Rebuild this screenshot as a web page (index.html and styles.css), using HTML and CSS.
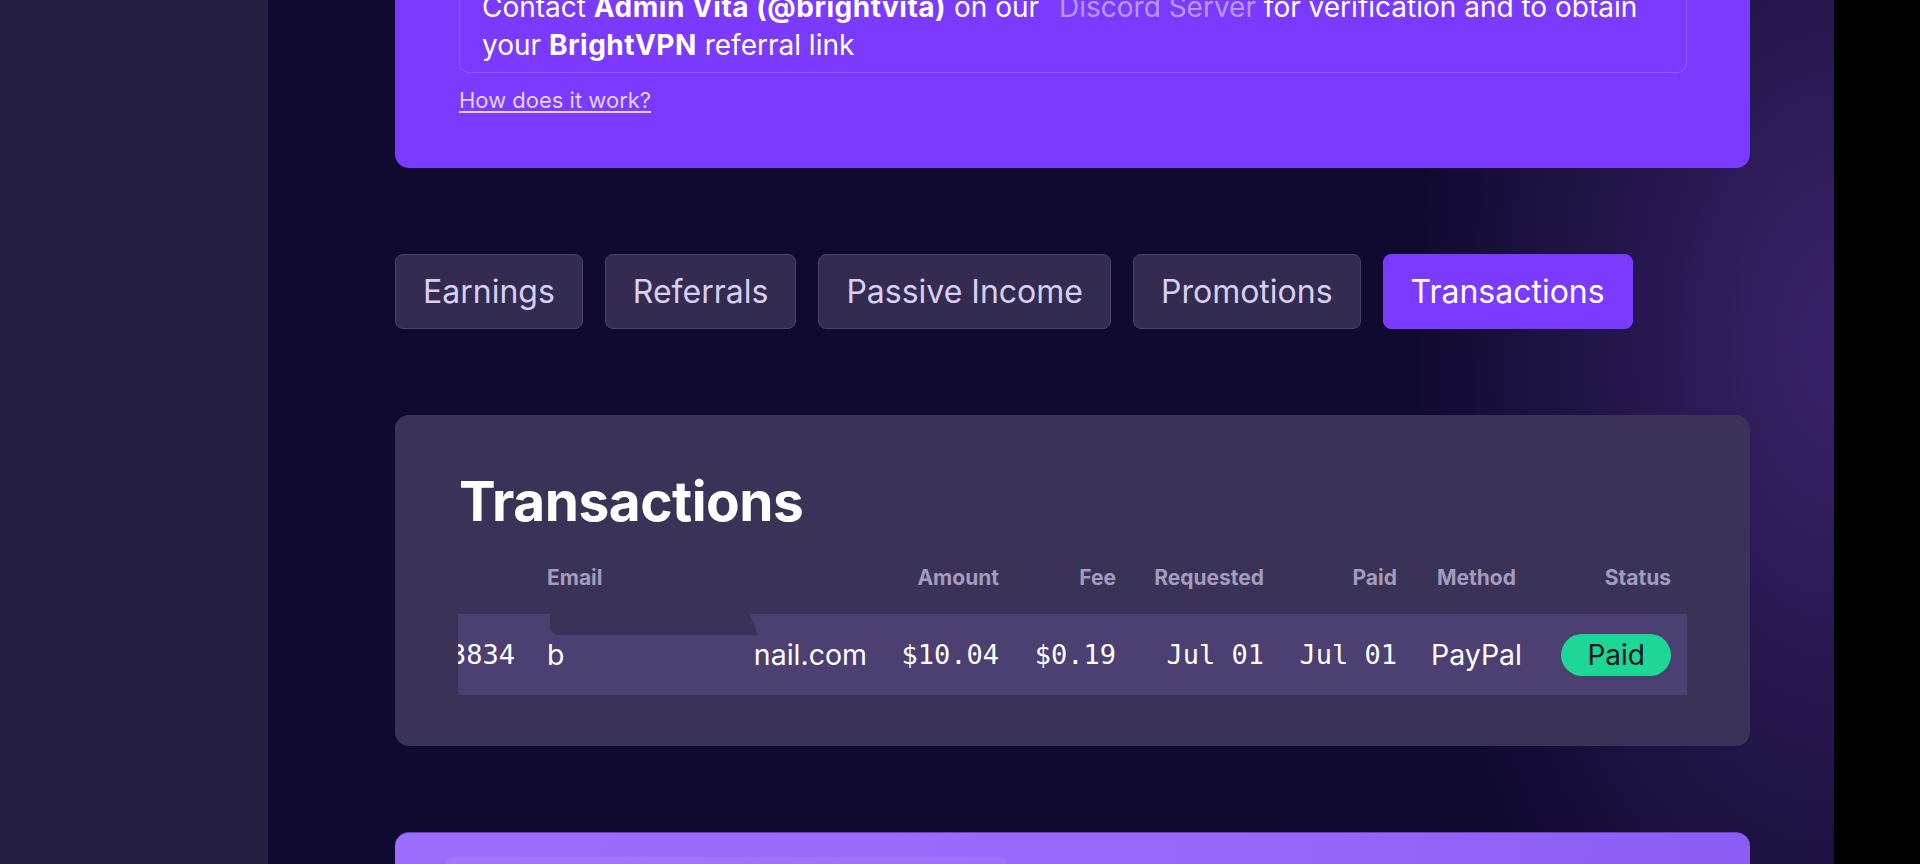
FILE: index.html
```html
<!DOCTYPE html>
<html lang="en">
<head>
  <meta charset="UTF-8" />
  <meta name="viewport" content="width=device-width, initial-scale=1.0"/>
  <title>Transactions</title>
  <link rel="stylesheet" href="styles.css">
</head>
<body>
  <aside class="sidebar"></aside>

  <main class="main">
    <section class="promo-card">
      <div class="promo-note">
        Contact <strong>Admin Vita (@brightvita)</strong> on our <a class="discord-link" href="#">Discord Server</a> for verification and to obtain<br>
        your <strong>BrightVPN</strong> referral link
      </div>
      <a class="how-link" href="#">How does it work?</a>
    </section>

    <nav class="tabs">
      <button class="tab">Earnings</button>
      <button class="tab">Referrals</button>
      <button class="tab">Passive Income</button>
      <button class="tab">Promotions</button>
      <button class="tab active">Transactions</button>
    </nav>

    <section class="panel">
      <h2 class="panel-title">Transactions</h2>
      <div class="table-scroll">
        <div class="tx-table">
          <div class="th">ID</div>
          <div class="th">Email</div>
          <div class="th right">Amount</div>
          <div class="th right">Fee</div>
          <div class="th right">Requested</div>
          <div class="th right">Paid</div>
          <div class="th center">Method</div>
          <div class="th right">Status</div>

          <div class="td right mono">13834</div>
          <div class="td email">b<span class="email-hidden"></span>nail.com<span class="redact"></span></div>
          <div class="td right mono">$10.04</div>
          <div class="td right mono">$0.19</div>
          <div class="td right mono">Jul 01</div>
          <div class="td right mono">Jul 01</div>
          <div class="td center">PayPal</div>
          <div class="td right"><span class="badge paid">Paid</span></div>
        </div>
      </div>
    </section>

    <section class="promo-card next">
      <div class="next-head"></div>
    </section>
  </main>

  <div class="edge"></div>
</body>
</html>
```

FILE: styles.css
```css
* {
  margin: 0;
  padding: 0;
  box-sizing: border-box;
}

body {
  font-family: Inter, "Open Sans", sans-serif;
  background: #000000;
  color: #ffffff;
  display: flex;
  height: 864px;
  overflow: hidden;
}

.sidebar {
  width: 268px;
  flex-shrink: 0;
  background: #25203f;
}

.edge {
  width: 86px;
  flex-shrink: 0;
  background: #000000;
}

.main {
  width: 1566px;
  flex-shrink: 0;
  padding: 0 84px 0 127px;
  display: flex;
  flex-direction: column;
  gap: 86px;
  overflow: hidden;
  background:
    radial-gradient(ellipse 420px 760px at 100% 40%, rgba(58, 36, 108, 0.95), rgba(17, 10, 48, 0) 100%),
    #110a30;
}

/* referral card */
.promo-card {
  background: #7b3aff;
  border-radius: 14px;
  padding: 40px 63px 54px 64px;
  margin-top: -65px;
  flex-shrink: 0;
}

.promo-note {
  border: 1px solid rgba(255, 255, 255, 0.18);
  border-radius: 10px;
  padding: 12px 22px 8px;
  font-size: 28px;
  line-height: 38px;
  color: #ffffff;
  white-space: nowrap;
}

.promo-note strong {
  font-weight: 700;
  letter-spacing: 0.5px;
}

.discord-link {
  color: #b499fb;
  text-decoration: none;
  margin-left: 12px;
}

.how-link {
  display: inline-block;
  margin-top: 13px;
  font-size: 22px;
  line-height: 28px;
  color: #e2d3ff;
  text-decoration: underline;
  text-underline-offset: 3px;
}

/* tabs */
.tabs {
  display: flex;
  gap: 22px;
  flex-shrink: 0;
}

.tab {
  height: 75px;
  padding: 0 27px;
  background: #342b50;
  border: 1px solid #4b4269;
  border-radius: 8px;
  color: #d8d0f0;
  font-family: inherit;
  font-size: 32px;
  cursor: pointer;
}

.tab.active {
  background: #7b3aff;
  border-color: #7b3aff;
  color: #ffffff;
}

/* transactions panel */
.panel {
  background: #3b3357;
  border-radius: 14px;
  padding: 52px 63px 51px 63px;
  flex-shrink: 0;
}

.panel-title {
  font-size: 55px;
  font-weight: 700;
  line-height: 68px;
  letter-spacing: -0.5px;
  color: #ffffff;
  padding-left: 1px;
}

.table-scroll {
  margin-top: 20px;
  overflow: hidden;
}

.tx-table {
  display: grid;
  grid-template-columns: 120px 352px 132px 117px 148px 133px 127px 147px;
  width: 1276px;
  margin-left: -47px;
}

.th {
  padding: 8px 16px 21px;
  font-size: 21px;
  line-height: 30px;
  font-weight: 700;
  color: #a39cbd;
}

.th.right { text-align: right; }
.th.center { text-align: center; }

.td {
  height: 81px;
  padding: 0 16px;
  background: #4c3f71;
  display: flex;
  align-items: center;
  font-size: 28.5px;
  color: #ffffff;
  white-space: nowrap;
}

.td.right { justify-content: flex-end; }
.td.center { justify-content: center; }

.mono {
  font-family: "DejaVu Sans Mono", "Liberation Mono", monospace;
  font-size: 27px;
}

.email {
  position: relative;
}

.email-hidden {
  display: inline-block;
  width: 190px;
}

.redact {
  position: absolute;
  top: 0;
  left: 19px;
  width: 208px;
  height: 21px;
  background: #3b3357;
  border-bottom-left-radius: 8px;
  clip-path: polygon(0 0, 96% 0, 100% 100%, 0 100%);
}

.badge {
  display: inline-flex;
  align-items: center;
  height: 42px;
  padding: 0 26px;
  border-radius: 21px;
  font-size: 28px;
}

.badge.paid {
  background: #1ed696;
  color: #12151a;
}

/* next card, cut by the viewport */
.promo-card.next {
  margin-top: 0;
  height: 300px;
  padding: 24px 64px;
  background: linear-gradient(100deg, #9d6efc 0%, #9767fa 60%, #8b5cf5 100%);
  border-top: 1px solid #6a3fc0;
}

.next-head {
  width: 560px;
  height: 60px;
  margin-left: -13px;
  border-radius: 6px;
  background: rgba(255, 255, 255, 0.06);
}
```
